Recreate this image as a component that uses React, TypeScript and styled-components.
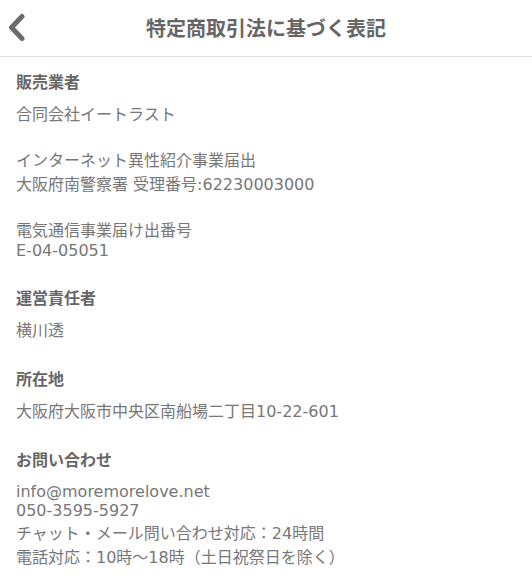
import React from "react";
import styled, { createGlobalStyle } from "styled-components";

const GlobalStyle = createGlobalStyle`
  html, body {
    margin: 0;
    padding: 0;
    background: #ffffff;
  }
  body {
    font-family: "DejaVu Sans", "Noto Sans CJK JP", sans-serif;
    -webkit-font-smoothing: antialiased;
  }
`;

const Page = styled.div`
  width: 532px;
  min-height: 576px;
  background: #ffffff;
`;

const Header = styled.header`
  height: 56px;
  display: grid;
  grid-template-columns: 48px 1fr 48px;
  align-items: center;
  border-bottom: 1px solid #e2e2e2;
  box-sizing: content-box;
`;

const BackButton = styled.button`
  width: 48px;
  height: 56px;
  padding: 0 0 0 6px;
  margin: 0;
  border: none;
  background: transparent;
  display: flex;
  align-items: center;
  justify-content: flex-start;
  cursor: pointer;
`;

const Title = styled.h1`
  margin: 0;
  text-align: center;
  font-family: "Noto Sans CJK JP", sans-serif;
  font-size: 20px;
  font-weight: 700;
  color: #666666;
  line-height: 56px;
`;

const Content = styled.main`
  padding: 12px 16px 0 16px;
  display: flex;
  flex-direction: column;
  gap: 25px;
`;

const Section = styled.section`
  display: flex;
  flex-direction: column;
`;

const Heading = styled.h2<{ $space?: number }>`
  margin: 0 0 ${(p) => p.$space ?? 8}px 0;
  font-size: 16px;
  font-weight: 700;
  color: #666666;
  line-height: normal;
`;

const Body = styled.div`
  display: flex;
  flex-direction: column;
  gap: 22px;
`;

const Para = styled.p`
  margin: 0;
  font-size: 16px;
  font-weight: 400;
  color: #777777;
  line-height: normal;
  white-space: nowrap;
`;

const BackIcon = () => (
  <svg width="22" height="30" viewBox="0 0 22 30" aria-hidden="true">
    <path
      d="M16 3.5 L5.5 14.5 L16 25.5"
      fill="none"
      stroke="#6b6b6b"
      strokeWidth="5"
      strokeLinecap="round"
      strokeLinejoin="round"
    />
  </svg>
);

type Block = { heading: string; paras: string[][]; space?: number };

const blocks: Block[] = [
  {
    heading: "販売業者",
    paras: [
      ["合同会社イートラスト"],
      ["インターネット異性紹介事業届出", "大阪府南警察署 受理番号:62230003000"],
      ["電気通信事業届け出番号", "E-04-05051"],
    ],
  },
  { heading: "運営責任者", paras: [["横川透"]] },
  { heading: "所在地", paras: [["大阪府大阪市中央区南船場二丁目10-22-601"]] },
  {
    heading: "お問い合わせ",
    space: 11,
    paras: [
      [
        "info@moremorelove.net",
        "050-3595-5927",
        "チャット・メール問い合わせ対応：24時間",
        "電話対応：10時〜18時（土日祝祭日を除く）",
      ],
    ],
  },
];

export default function App() {
  return (
    <Page>
      <GlobalStyle />
      <Header>
        <BackButton aria-label="戻る">
          <BackIcon />
        </BackButton>
        <Title>特定商取引法に基づく表記</Title>
        <span />
      </Header>
      <Content>
        {blocks.map((b) => (
          <Section key={b.heading}>
            <Heading $space={b.space}>{b.heading}</Heading>
            <Body>
              {b.paras.map((lines, i) => (
                <Para key={i}>
                  {lines.map((l, j) => (
                    <React.Fragment key={j}>
                      {j > 0 && <br />}
                      {l}
                    </React.Fragment>
                  ))}
                </Para>
              ))}
            </Body>
          </Section>
        ))}
      </Content>
    </Page>
  );
}
